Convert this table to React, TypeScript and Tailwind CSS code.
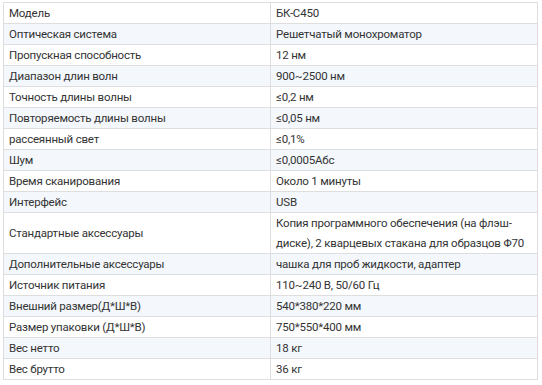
const rows: [string, string][] = [
  ["Модель", "БК-С450"],
  ["Оптическая система", "Решетчатый монохроматор"],
  ["Пропускная способность", "12 нм"],
  ["Диапазон длин волн", "900~2500 нм"],
  ["Точность длины волны", "≤0,2 нм"],
  ["Повторяемость длины волны", "≤0,05 нм"],
  ["рассеянный свет", "≤0,1%"],
  ["Шум", "≤0,0005Абс"],
  ["Время сканирования", "Около 1 минуты"],
  ["Интерфейс", "USB"],
  [
    "Стандартные аксессуары",
    "Копия программного обеспечения (на флэш-диске), 2 кварцевых стакана для образцов Φ70",
  ],
  ["Дополнительные аксессуары", "чашка для проб жидкости, адаптер"],
  ["Источник питания", "110~240 В, 50/60 Гц"],
  ["Внешний размер(Д*Ш*В)", "540*380*220 мм"],
  ["Размер упаковки (Д*Ш*В)", "750*550*400 мм"],
  ["Вес нетто", "18 кг"],
  ["Вес брутто", "36 кг"],
];

export default function App() {
  return (
    <div className="w-[542px] h-[385px] bg-white pt-[2px] pl-[3px] font-['Roboto',sans-serif] text-[11.5px] tracking-[-0.2px] leading-[20px] text-[#333]">
      <table className="w-[535px] border-collapse table-fixed">
        <colgroup>
          <col className="w-[267px]" />
          <col />
        </colgroup>
        <tbody>
          {rows.map(([k, v], i) => (
            <tr key={k} className={i % 2 === 1 ? "bg-[#f4f8fd]" : "bg-white"}>
              <td className="border border-[#dedede] px-[5px] py-0 align-middle">{k}</td>
              <td className="border border-[#dedede] px-[5px] py-0 align-middle">{v}</td>
            </tr>
          ))}
        </tbody>
      </table>
    </div>
  );
}
